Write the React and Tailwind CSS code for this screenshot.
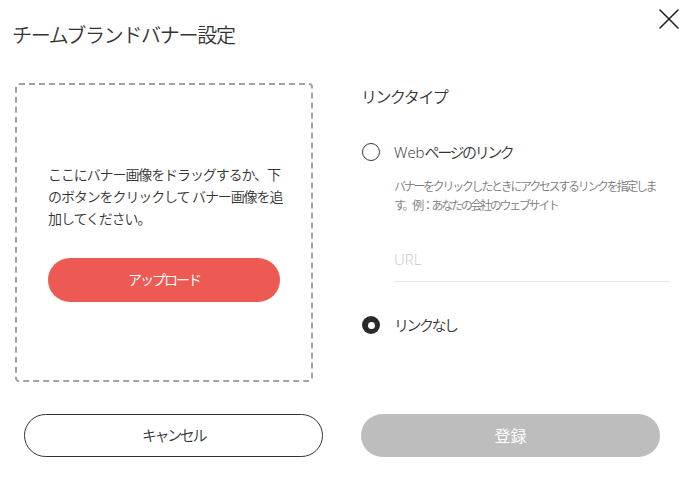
const FONT = "font-['Open_Sans','Noto_Sans_CJK_JP',sans-serif]";

function Radio({ checked }) {
  return checked ? (
    <span className="flex h-[18px] w-[18px] shrink-0 items-center justify-center rounded-full bg-[#2a2a2a]">
      <span className="h-[7px] w-[7px] rounded-full bg-white" />
    </span>
  ) : (
    <span className="h-[18px] w-[18px] shrink-0 rounded-full border-[1.5px] border-[#3a3a3a]" />
  );
}

export default function App() {
  return (
    <div className={`h-[477px] w-[689px] bg-white font-[350] text-[#333] ${FONT}`}>
      <header className="flex items-start justify-between pl-[12px] pr-[10px]">
        <h1 className="pt-[24px] text-[20px] leading-[24px] font-[350] tracking-[-1.3px]">チームブランドバナー設定</h1>
        <button type="button" aria-label="閉じる" className="mt-[9px] h-[20px] w-[20px]">
          <svg viewBox="0 0 20 20" className="h-[20px] w-[20px]" fill="none" stroke="#222" strokeWidth="1.6" strokeLinecap="round">
            <path d="M1 1 L19 19 M19 1 L1 19" />
          </svg>
        </button>
      </header>

      <main className="mt-[35px] flex">
        <div className="ml-[15px] flex h-[299px] w-[298px] flex-col items-center justify-center rounded-[4px] border-2 border-dashed border-[#a3a3a3]">
          <p className="w-[232px] whitespace-nowrap text-[14px] leading-[22px] tracking-[-1.1px]">
            ここにバナー画像をドラッグするか、下<br />
            のボタンをクリックして バナー画像を追<br />
            加してください。
          </p>
          <button type="button" className="mt-[28px] h-[44px] w-[232px] rounded-full bg-[#ec5a53] text-[14px] font-normal tracking-[-2px] text-white">
            アップロード
          </button>
        </div>

        <section className="ml-[48px] w-[309px]">
          <h2 className="mt-[2px] text-[16px] leading-[24px] tracking-[-1.5px]">リンクタイプ</h2>

          <label className="mt-[31px] flex h-[24px] items-center pl-[1px]">
            <Radio />
            <span className="ml-[14px] text-[15px]">
              Web<span className="tracking-[-2.4px]">ページのリンク</span>
            </span>
          </label>
          <p className="mt-[13px] whitespace-nowrap pl-[33px] text-[12px] leading-[19px] tracking-[-2.3px] text-[#7a7a7a]">
            バナーをクリックしたときにアクセスするリンクを指定しま<br />
            す。例：あなたの会社のウェブサイト
          </p>

          <div className="ml-[33px] mt-[32px] border-b border-[#e6e6e6] pb-[10px] text-[15px] leading-[24px] text-[#c9c9c9]">
            URL
          </div>

          <label className="mt-[31px] flex h-[24px] items-center pl-[1px]">
            <Radio checked />
            <span className="ml-[14px] text-[15px] tracking-[-2.5px]">リンクなし</span>
          </label>
        </section>
      </main>

      <footer className="mt-[32px] flex gap-[38px] pl-[24px]">
        <button type="button" className="h-[43px] w-[299px] rounded-full border border-[#333] text-[15px] tracking-[-2.4px]">
          キャンセル
        </button>
        <button type="button" className="h-[43px] w-[299px] rounded-full bg-[#bdbdbd] text-[16px] font-normal text-white">
          登録
        </button>
      </footer>
    </div>
  );
}
